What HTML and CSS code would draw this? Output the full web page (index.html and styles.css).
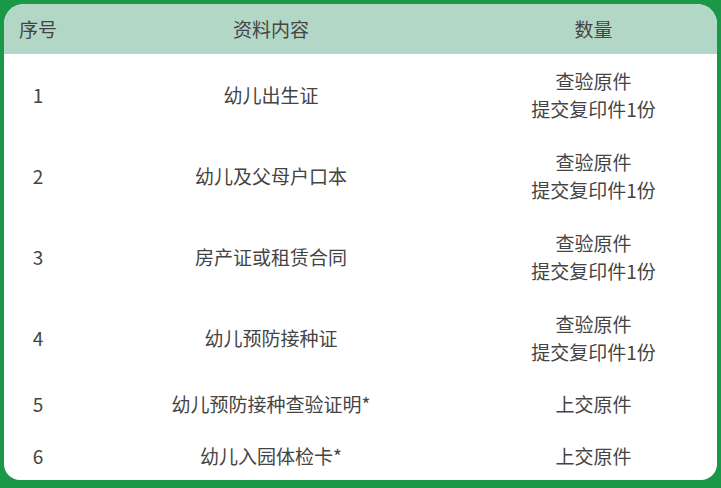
FILE: index.html
```html
<!DOCTYPE html>
<html lang="zh-CN">
<head>
<meta charset="utf-8">
<link rel="stylesheet" href="styles.css">
</head>
<body>
<div class="card">
  <table class="docs">
    <colgroup>
      <col class="c-no">
      <col class="c-item">
      <col class="c-qty">
    </colgroup>
    <thead>
      <tr><th>序号</th><th>资料内容</th><th>数量</th></tr>
    </thead>
    <tbody>
      <tr><td>1</td><td>幼儿出生证</td><td>查验原件<br>提交复印件1份</td></tr>
      <tr><td>2</td><td>幼儿及父母户口本</td><td>查验原件<br>提交复印件1份</td></tr>
      <tr><td>3</td><td>房产证或租赁合同</td><td>查验原件<br>提交复印件1份</td></tr>
      <tr><td>4</td><td>幼儿预防接种证</td><td>查验原件<br>提交复印件1份</td></tr>
      <tr class="single"><td>5</td><td>幼儿预防接种查验证明*</td><td>上交原件</td></tr>
      <tr class="single"><td>6</td><td>幼儿入园体检卡*</td><td>上交原件</td></tr>
    </tbody>
  </table>
</div>
</body>
</html>
```
FILE: styles.css
```css
html, body {
  margin: 0;
  padding: 0;
}
body {
  background: #1a9848;
  width: 721px;
  height: 488px;
  overflow: hidden;
  padding: 4px 4px 8px 4px;
  box-sizing: border-box;
  font-family: "Noto Sans CJK SC", "Noto Sans", sans-serif;
  color: #444;
}
.card {
  width: 713px;
  height: 476px;
  background: #fff;
  border-radius: 20px 20px 16px 16px;
  overflow: hidden;
}
.docs {
  width: 100%;
  border-collapse: collapse;
  table-layout: fixed;
  font-size: 19px;
  line-height: 28px;
}
.c-no { width: 68px; }
.c-item { width: 398px; }
.c-qty { width: 247px; }
.docs th {
  background: #b2d7c7;
  font-weight: normal;
  height: 50px;
  padding: 0;
  text-align: center;
  vertical-align: middle;
}
.docs td {
  padding: 13px 0 12px;
  text-align: center;
  vertical-align: middle;
}
.docs .single td {
  padding: 12px 0;
}
```
